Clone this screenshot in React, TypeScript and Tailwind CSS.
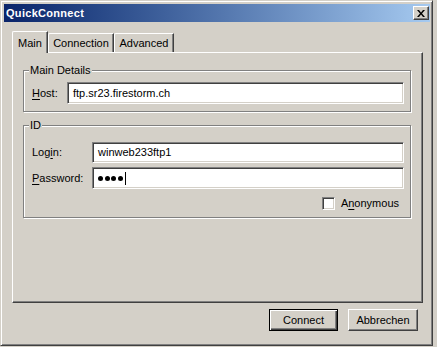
import React from "react";

const font = { fontFamily: '"Liberation Sans", Arial, sans-serif' };

function Edit({ children, className = "" }: { children?: React.ReactNode; className?: string }) {
  return (
    <div
      className={`flex items-center h-[21px] bg-white border border-t-[#808080] border-l-[#808080] border-r-white border-b-white shadow-[inset_1px_1px_0_#404040,inset_-1px_-1px_0_#d4d0c8] pl-[5px] text-[11px] text-black ${className}`}
    >
      {children}
    </div>
  );
}

function GroupBox({ title, className = "", children }: { title: string; className?: string; children: React.ReactNode }) {
  return (
    <div className={`relative border border-[#808080] shadow-[1px_1px_0_#fff,inset_1px_1px_0_#fff] ${className}`}>
      <span className="absolute left-[5px] top-[-8px] bg-[#d4d0c8] px-[1px] text-[11px] leading-[14px] text-black">
        {title}
      </span>
      {children}
    </div>
  );
}

export default function App() {
  return (
    <div className="w-[437px] h-[347px] bg-[#d4d0c8] select-none" style={font}>
      <div className="w-[433px] h-[346px] flex flex-col border border-t-[#d4d0c8] border-l-[#d4d0c8] border-r-[#404040] border-b-[#404040] shadow-[inset_1px_1px_0_#fff,inset_-1px_-1px_0_#808080] pt-[3px] pl-[3px] pr-[2px]">
        {/* title bar */}
        <div className="h-[18px] flex items-center justify-between bg-gradient-to-r from-[#0a246a] to-[#a6caf0] pl-[2px] pr-[1px]">
          <span className="text-[11px] font-bold tracking-[0.3px] text-white">QuickConnect</span>
          <div className="w-[16px] h-[14px] flex items-center justify-center bg-[#d4d0c8] border border-t-white border-l-white border-r-[#404040] border-b-[#404040] shadow-[inset_-1px_-1px_0_#808080]">
            <svg width="8" height="7" viewBox="0 0 8 7">
              <path d="M0 0h2l2 2.5L6 0h2L5 3.5 8 7H6L4 4.5 2 7H0l3-3.5z" fill="#000" />
            </svg>
          </div>
        </div>

        {/* tabs */}
        <div className="pl-[8px] pt-[9px]">
          <div className="flex items-end h-[21px]">
            <div className="relative z-10 -mb-px w-[36px] h-[22px] flex items-start justify-center pt-[3px] bg-[#d4d0c8] border-t border-l border-white rounded-tl-[2px] border-r border-r-[#404040] shadow-[inset_-1px_0_0_#808080] text-[11px] text-black">
              Main
            </div>
            <div className="w-[66px] h-[19px] flex items-center justify-center border-t border-l border-white rounded-tl-[2px] border-r border-r-[#404040] shadow-[inset_-1px_0_0_#808080] text-[11px] text-black">
              Connection
            </div>
            <div className="w-[60px] h-[19px] flex items-center justify-center border-t border-l border-white rounded-tl-[2px] border-r border-r-[#404040] shadow-[inset_-1px_0_0_#808080] text-[11px] text-black">
              Advanced
            </div>
          </div>

          {/* tab panel */}
          <div className="w-[411px] h-[251px] border-t border-l border-white border-r border-b border-r-[#404040] border-b-[#404040] shadow-[inset_-1px_-1px_0_#808080] pt-[17px] pl-[10px]">
            <GroupBox title="Main Details" className="w-[388px] h-[42px] pt-[11px] pl-[8px]">
              <div className="flex items-center">
                <span className="w-[35px] text-[11px] text-black">
                  <span className="underline underline-offset-2">H</span>ost:
                </span>
                <Edit className="w-[337px] h-[22px]">ftp.sr23.firestorm.ch</Edit>
              </div>
            </GroupBox>

            <GroupBox title="ID" className="mt-[13px] w-[388px] h-[93px] pt-[16px] pl-[8px]">
              <div className="flex items-center">
                <span className="w-[60px] text-[11px] text-black">
                  Log<span className="underline underline-offset-2">i</span>n:
                </span>
                <Edit className="w-[312px]">winweb233ftp1</Edit>
              </div>
              <div className="flex items-center mt-[4px]">
                <span className="w-[60px] text-[11px] text-black">
                  <span className="underline underline-offset-2">P</span>assword:
                </span>
                <Edit className="w-[312px] h-[22px] gap-[1.5px]">
                  <span className="w-[5px] h-[5px] rounded-full bg-black" />
                  <span className="w-[5px] h-[5px] rounded-full bg-black" />
                  <span className="w-[5px] h-[5px] rounded-full bg-black" />
                  <span className="w-[5px] h-[5px] rounded-full bg-black" />
                  <span className="ml-[1px] w-[1px] h-[13px] bg-black" />
                </Edit>
              </div>
              <div className="flex items-center justify-end mt-[6px] pr-[11px] gap-[6px]">
                <span className="w-[13px] h-[13px] bg-white border border-t-[#808080] border-l-[#808080] border-r-white border-b-white shadow-[inset_1px_1px_0_#404040,inset_-1px_-1px_0_#d4d0c8]" />
                <span className="text-[11px] text-black">
                  A<span className="underline underline-offset-2">n</span>onymous
                </span>
              </div>
            </GroupBox>
          </div>

          {/* buttons */}
          <div className="w-[411px] flex justify-end gap-[10px] pr-[5px] mt-[6px]">
            <div className="w-[69px] h-[22px] flex items-center justify-center border border-black shadow-[inset_1px_1px_0_#fff,inset_-1px_-1px_0_#404040,inset_-2px_-2px_0_#808080] text-[11px] text-black">
              Connect
            </div>
            <div className="w-[70px] h-[22px] flex items-center justify-center border border-t-white border-l-white border-r-[#404040] border-b-[#404040] shadow-[inset_-1px_-1px_0_#808080] text-[11px] text-black">
              Abbrechen
            </div>
          </div>
        </div>
      </div>
    </div>
  );
}
